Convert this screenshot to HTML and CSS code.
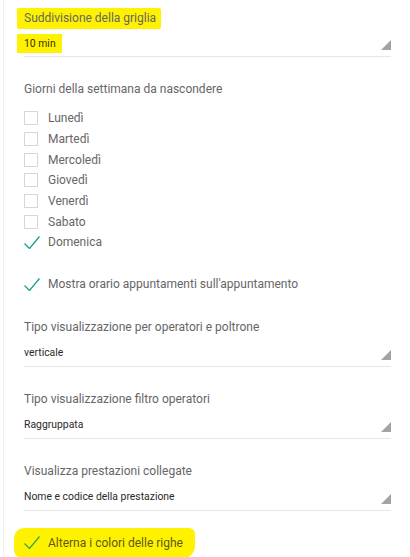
FILE: index.html
```html
<!DOCTYPE html>
<html lang="it">
<head>
<meta charset="utf-8">
<link rel="stylesheet" href="styles.css">
</head>
<body>
<div class="page">
  <div class="form">
    <div class="field">
      <div class="label"><span class="hl hl-label">Suddivisione della griglia</span></div>
      <div class="select">
        <span class="value"><span class="hl hl-value">10 min</span></span>
        <span class="tri"></span>
      </div>
    </div>

    <div class="field">
      <div class="label">Giorni della settimana da nascondere</div>
      <ul class="days">
        <li class="check-row"><span class="box"></span><span>Lunedì</span></li>
        <li class="check-row"><span class="box"></span><span>Martedì</span></li>
        <li class="check-row"><span class="box"></span><span>Mercoledì</span></li>
        <li class="check-row"><span class="box"></span><span>Giovedì</span></li>
        <li class="check-row"><span class="box"></span><span>Venerdì</span></li>
        <li class="check-row"><span class="box"></span><span>Sabato</span></li>
        <li class="check-row"><svg class="tick" viewBox="0 0 16 13"><path d="M0.5 7.5 L5.5 12.5 L15.5 0.5" /></svg><span>Domenica</span></li>
      </ul>
    </div>

    <div class="check-row single"><svg class="tick" viewBox="0 0 16 13"><path d="M0.5 7.5 L5.5 12.5 L15.5 0.5" /></svg><span>Mostra orario appuntamenti sull'appuntamento</span></div>

    <div class="field">
      <div class="label">Tipo visualizzazione per operatori e poltrone</div>
      <div class="select">
        <span class="value">verticale</span>
        <span class="tri"></span>
      </div>
    </div>

    <div class="field">
      <div class="label">Tipo visualizzazione filtro operatori</div>
      <div class="select">
        <span class="value">Raggruppata</span>
        <span class="tri"></span>
      </div>
    </div>

    <div class="field">
      <div class="label">Visualizza prestazioni collegate</div>
      <div class="select">
        <span class="value">Nome e codice della prestazione</span>
        <span class="tri"></span>
      </div>
    </div>

    <div class="check-row marked"><svg class="tick" viewBox="0 0 16 13"><path d="M0.5 7.5 L5.5 12.5 L15.5 0.5" /></svg><span>Alterna i colori delle righe</span></div>
  </div>
</div>
</body>
</html>
```

FILE: styles.css
```css
html, body {
  margin: 0;
  padding: 0;
  background: #fff;
}
body {
  font-family: Roboto, "Liberation Sans", sans-serif;
  color: #666;
}
.page {
  margin-left: 3px;
  border-left: 1px solid #f0f0f0;
  min-height: 557px;
  box-sizing: border-box;
}
.form {
  display: flex;
  flex-direction: column;
  gap: 22px;
  padding: 7px 19px 0 20px;
}
.field {
  display: flex;
  flex-direction: column;
}
.label {
  font-size: 12px;
  line-height: 20px;
  height: 20px;
  color: #666;
  white-space: nowrap;
}
.hl {
  background: #fff200;
  display: inline-block;
}
.hl-label {
  margin-left: -7px;
  padding: 0 5px 0 7px;
  border-radius: 2px;
  line-height: 21px;
  margin-top: 1px;
}
.hl-value {
  margin-left: -7px;
  padding: 1px 6px 0 7px;
  line-height: 18px;
  color: #3a2e00;
}
.select {
  display: flex;
  justify-content: space-between;
  align-items: flex-start;
  height: 29px;
  border-bottom: 1px solid #e6e6e6;
}
.value {
  font-size: 10.4px;
  line-height: 14px;
  margin-top: 9px;
  color: #2a2a2a;
}
.select .value .hl {
  margin-top: -2px;
}
.tri {
  width: 0;
  height: 0;
  border-left: 10px solid transparent;
  border-bottom: 10px solid #a3a3a3;
  margin-top: 13px;
}
.days {
  list-style: none;
  margin: 9px 0 0;
  padding: 0;
}
.check-row {
  display: flex;
  align-items: center;
  height: 20.7px;
  font-size: 12px;
  color: #666;
  white-space: nowrap;
}
.single {
  margin-top: -1px;
}
.box {
  width: 12px;
  height: 12px;
  border: 1px solid #d6d6d6;
  margin-right: 10px;
  flex: none;
}
.tick {
  width: 16px;
  height: 13px;
  margin-right: 8px;
  flex: none;
  fill: none;
  stroke: #1a9e8f;
  stroke-width: 1.3;
}
.marked {
  align-self: flex-start;
  background: #fff200;
  margin-left: -10px;
  padding: 5px 12px 5px 10px;
  border-radius: 10px 6px 12px 8px;
  margin-top: -5px;
  color: #5e5a10;
}
.marked .tick {
  stroke: #3aa63a;
}
```
